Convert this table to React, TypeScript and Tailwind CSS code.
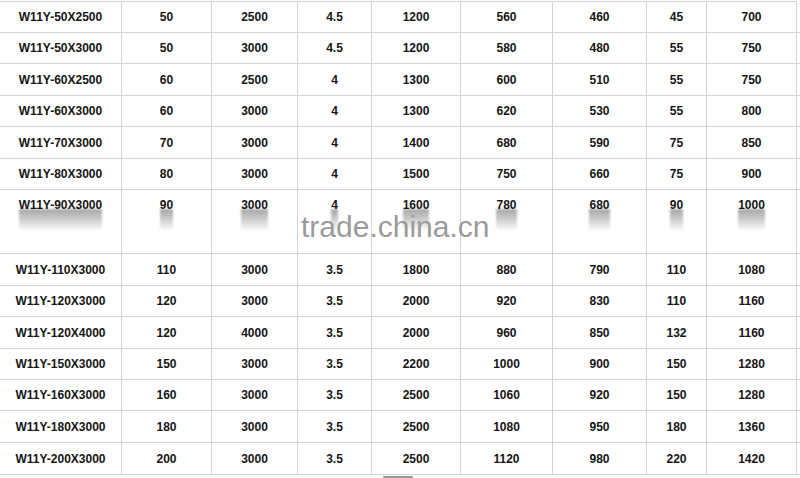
import React from "react";

const colWidths = [
    "w-[122px]",
    "w-[90px]",
    "w-[86px]",
    "w-[74px]",
    "w-[89px]",
    "w-[92px]",
    "w-[94px]",
    "w-[60px]",
    "w-[90px]",
];

type Row = { h: string; cells: string[]; tall?: boolean };

const rows: Row[] = [
    { h: "h-[31px]", cells: ["W11Y-50X2500", "50", "2500", "4.5", "1200", "560", "460", "45", "700"] },
    { h: "h-[31px]", cells: ["W11Y-50X3000", "50", "3000", "4.5", "1200", "580", "480", "55", "750"] },
    { h: "h-[32px]", cells: ["W11Y-60X2500", "60", "2500", "4", "1300", "600", "510", "55", "750"] },
    { h: "h-[31px]", cells: ["W11Y-60X3000", "60", "3000", "4", "1300", "620", "530", "55", "800"] },
    { h: "h-[32px]", cells: ["W11Y-70X3000", "70", "3000", "4", "1400", "680", "590", "75", "850"] },
    { h: "h-[31px]", cells: ["W11Y-80X3000", "80", "3000", "4", "1500", "750", "660", "75", "900"] },
    { h: "h-[64px]", tall: true, cells: ["W11Y-90X3000", "90", "3000", "4", "1600", "780", "680", "90", "1000"] },
    { h: "h-[32px]", cells: ["W11Y-110X3000", "110", "3000", "3.5", "1800", "880", "790", "110", "1080"] },
    { h: "h-[31px]", cells: ["W11Y-120X3000", "120", "3000", "3.5", "2000", "920", "830", "110", "1160"] },
    { h: "h-[32px]", cells: ["W11Y-120X4000", "120", "4000", "3.5", "2000", "960", "850", "132", "1160"] },
    { h: "h-[31px]", cells: ["W11Y-150X3000", "150", "3000", "3.5", "2200", "1000", "900", "150", "1280"] },
    { h: "h-[31px]", cells: ["W11Y-160X3000", "160", "3000", "3.5", "2500", "1060", "920", "150", "1280"] },
    { h: "h-[32px]", cells: ["W11Y-180X3000", "180", "3000", "3.5", "2500", "1080", "950", "180", "1360"] },
    { h: "h-[32px]", cells: ["W11Y-200X3000", "200", "3000", "3.5", "2500", "1120", "980", "220", "1420"] },
];

const SpecRow = ({ row }: { row: Row }) => {
    return (
        <div className={`flex ${row.h} border-b border-[#d3d3d3]`}>
            {row.cells.map((cell, i) => (
                <div
                    key={i}
                    className={`${colWidths[i]} shrink-0 border-r border-[#d3d3d3] flex justify-center ${
                        row.tall ? "items-start pt-[8px]" : "items-center"
                    }`}
                >
                    {row.tall ? (
                        <div className="inline-flex flex-col items-center">
                            <span className="relative z-10 leading-[14px]">{cell}</span>
                            <div className="w-full h-[22px] -mt-[3px] bg-gradient-to-b from-[#a6a6a6] via-[#cfcfcf] to-transparent blur-[1px]" />
                        </div>
                    ) : (
                        <span>{cell}</span>
                    )}
                </div>
            ))}
        </div>
    );
};

export default function App() {
    return (
        <div
            className="relative w-[800px] h-[478px] bg-white overflow-hidden text-[12px] font-bold text-[#151515]"
            style={{ fontFamily: '"Liberation Sans", Arial, sans-serif' }}
        >
            <div className="mt-px w-[797px] h-px bg-[#d3d3d3]" />
            {rows.map((row, i) => (
                <SpecRow key={i} row={row} />
            ))}
            <div className="ml-[383px] mt-px w-[30px] h-[2px] bg-[#9a9a9a] rounded-full" />

            {/* watermark */}
            <div className="absolute left-[301px] top-[212px] z-20 text-[30px] leading-none font-normal text-[#9b9b9b]">
                trade.china.cn
            </div>
        </div>
    );
}
